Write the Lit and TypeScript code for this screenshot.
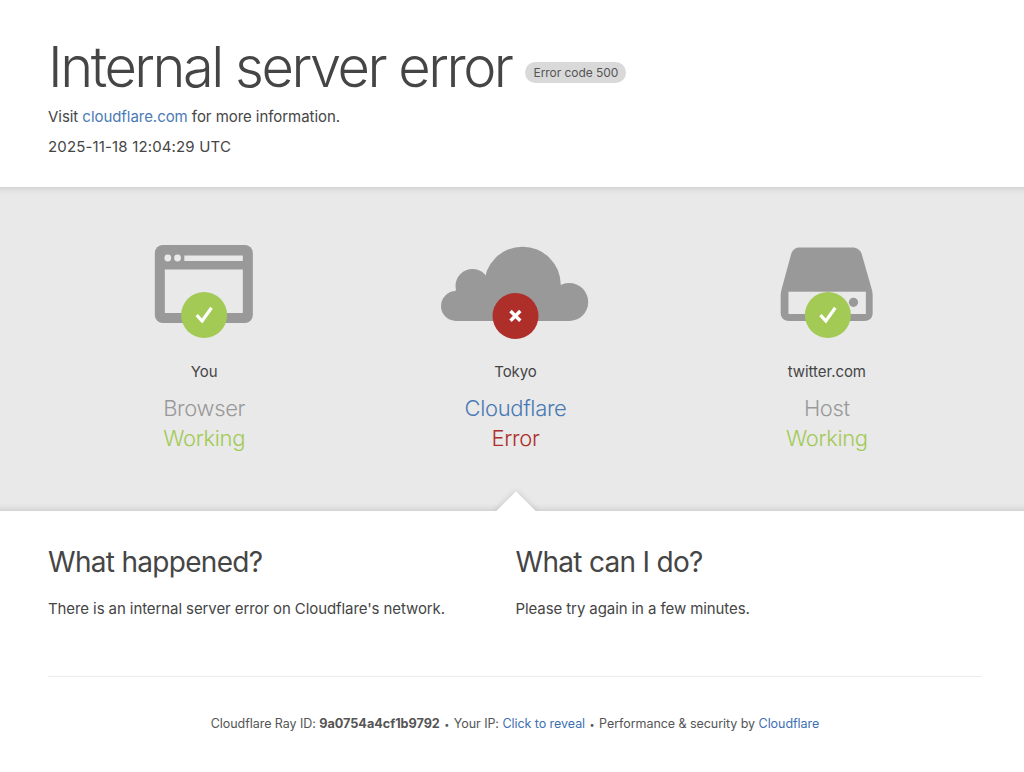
import { html, LitElement, css, svg, unsafeCSS } from "lit";
import { customElement } from "lit/decorators.js";

const OK = "#a2ca55";
const BAD = "#ae2f2a";
const GREY = "#999999";
const BG = "#e9e9e9";

const check = (cx: number, cy: number) => svg`
  <circle cx=${cx} cy=${cy} r="23" fill=${OK}></circle>
  <path d="M${cx - 7.4} ${cy + 0.2}l5.4 5.8 9.4 -13.2" fill="none" stroke="#fff" stroke-width="3.2"></path>
`;

const browserIcon = html`<svg class="icon" viewBox="124.17 240 160 100">
  <rect x="155" y="245" width="98" height="78" rx="8" fill=${GREY}></rect>
  <rect x="165" y="269.5" width="78" height="43.5" fill=${BG}></rect>
  <rect x="184.5" y="255.5" width="58.5" height="5.5" fill=${BG}></rect>
  <circle cx="168" cy="258" r="3.4" fill=${BG}></circle>
  <circle cx="177.7" cy="258" r="3.4" fill=${BG}></circle>
  ${check(204.3, 315)}
</svg>`;

const cloudIcon = html`<svg class="icon" viewBox="435.5 240 160 100">
  <g fill=${GREY}>
    <circle cx="523" cy="285" r="38.3"></circle>
    <circle cx="473" cy="286" r="17"></circle>
    <circle cx="456.5" cy="306" r="15"></circle>
    <circle cx="569.7" cy="302" r="19"></circle>
    <rect x="456" y="290" width="114" height="31"></rect>
  </g>
  <circle cx="516" cy="316" r="23" fill=${BAD}></circle>
  <path d="M511 311l9.8 9.8M520.8 311l-9.8 9.8" fill="none" stroke="#fff" stroke-width="3.4"></path>
</svg>`;

const hostIcon = html`<svg class="icon" viewBox="746.83 240 160 100">
  <path
    d="M799 247.5H852C857 247.5 860 250 861.5 254L871.5 289C872 291 872.5 293 872.5 295V313C872.5 318 869 321 864 321H789C784 321 780.5 318 780.5 313V295C780.5 293 781 291 781.5 289L791 254C792.5 250 795 247.5 799 247.5Z"
    fill=${GREY}
  ></path>
  <rect x="788.3" y="291.7" width="77.4" height="22.3" fill=${BG}></rect>
  <circle cx="853.3" cy="302.3" r="4.6" fill=${GREY}></circle>
  ${check(827.7, 315)}
</svg>`;

@customElement("app-root")
export class AppRoot extends LitElement {
  static styles = css`
    :host {
      display: block;
      font-family: Inter, "Liberation Sans", sans-serif;
      color: #454545;
      background: #fff;
    }

    a {
      text-decoration: none;
      color: #4a7ab5;
    }

    .top {
      padding: 32px 42px 0 48px;
      height: 187px;
      box-sizing: border-box;
    }

    .title {
      display: flex;
      align-items: center;
      gap: 14px;
    }

    h1 {
      margin: 0;
      font-size: 56px;
      line-height: 70px;
      font-weight: 300;
      letter-spacing: -2.5px;
    }

    .code {
      background: #d9d9d9;
      border-radius: 11px;
      font-size: 12px;
      line-height: 21px;
      padding: 0 8px;
      margin-top: 10px;
      color: #555;
      letter-spacing: -0.05px;
    }

    .top p {
      margin: 0;
      font-size: 15px;
      line-height: 30px;
      letter-spacing: -0.05px;
    }

    .top p.date {
      letter-spacing: 0.15px;
    }

    .diagram {
      position: relative;
      height: 324px;
      background: ${unsafeCSS(BG)};
      box-shadow: inset 0 8px 8px -8px rgba(0, 0, 0, 0.18), inset 0 -8px 8px -8px rgba(0, 0, 0, 0.18);
      display: grid;
      grid-template-columns: repeat(3, 1fr);
      padding: 53px 41.5px 0 48.5px;
      box-sizing: border-box;
    }

    .node {
      display: flex;
      flex-direction: column;
      align-items: center;
    }

    .icon {
      width: 160px;
      height: 100px;
      display: block;
    }

    .place {
      font-size: 15px;
      line-height: 20px;
      margin-top: 22px;
      letter-spacing: -0.05px;
    }

    .kind {
      font-size: 22px;
      line-height: 30px;
      font-weight: 300;
      margin-top: 11px;
      letter-spacing: -0.35px;
    }

    .kind.muted {
      color: #999;
    }

    .kind.blue {
      color: #4a7ab5;
    }

    .state {
      font-size: 22px;
      line-height: 30px;
      font-weight: 300;
      letter-spacing: -0.35px;
    }

    .state.ok {
      color: ${unsafeCSS(OK)};
    }

    .state.bad {
      color: ${unsafeCSS(BAD)};
    }

    .notch {
      position: absolute;
      left: 485px;
      bottom: 0;
      width: 61px;
      height: 24px;
      overflow: hidden;
    }

    .notch::after {
      content: "";
      position: absolute;
      left: 16.5px;
      top: 9.5px;
      width: 28px;
      height: 28px;
      background: #fff;
      transform: rotate(45deg);
      box-shadow: 0 0 6px rgba(0, 0, 0, 0.16);
    }

    .help {
      display: grid;
      grid-template-columns: 467.5px 467px;
      padding: 32px 42px 0 48px;
      height: 165px;
      box-sizing: border-box;
    }

    h2 {
      margin: 0;
      font-size: 28px;
      line-height: 38px;
      font-weight: 400;
      letter-spacing: -0.7px;
    }

    .help p {
      margin: 16px 0 0;
      font-size: 15px;
      line-height: 24px;
      letter-spacing: -0.09px;
    }

    footer {
      margin: 0 42px 0 48px;
      border-top: 1px solid #ededed;
      text-align: center;
      font-size: 12.5px;
      padding-top: 39px;
      line-height: 16px;
      color: #555;
      letter-spacing: -0.05px;
    }

    footer b {
      font-weight: 700;
      font-size: 12.7px;
    }

    footer a {
      color: #3d6fb4;
    }

    .dot {
      font-size: 9px;
      margin: 0 1px;
    }
  `;

  render() {
    return html`
      <div class="top">
        <div class="title">
          <h1>Internal server error</h1>
          <span class="code">Error code 500</span>
        </div>
        <p>Visit <a href="#">cloudflare.com</a> for more information.</p>
        <p class="date">2025-11-18 12:04:29 UTC</p>
      </div>

      <div class="diagram">
        <div class="node">
          ${browserIcon}
          <div class="place">You</div>
          <div class="kind muted">Browser</div>
          <div class="state ok">Working</div>
        </div>
        <div class="node">
          ${cloudIcon}
          <div class="place">Tokyo</div>
          <div class="kind blue">Cloudflare</div>
          <div class="state bad">Error</div>
        </div>
        <div class="node">
          ${hostIcon}
          <div class="place">twitter.com</div>
          <div class="kind muted">Host</div>
          <div class="state ok">Working</div>
        </div>
        <div class="notch"></div>
      </div>

      <div class="help">
        <div>
          <h2>What happened?</h2>
          <p>There is an internal server error on Cloudflare's network.</p>
        </div>
        <div>
          <h2>What can I do?</h2>
          <p>Please try again in a few minutes.</p>
        </div>
      </div>

      <footer>
        Cloudflare Ray ID: <b>9a0754a4cf1b9792</b> <span class="dot">•</span> Your IP: <a href="#">Click to reveal</a>
        <span class="dot">•</span> Performance &amp; security by <a href="#">Cloudflare</a>
      </footer>
    `;
  }
}
